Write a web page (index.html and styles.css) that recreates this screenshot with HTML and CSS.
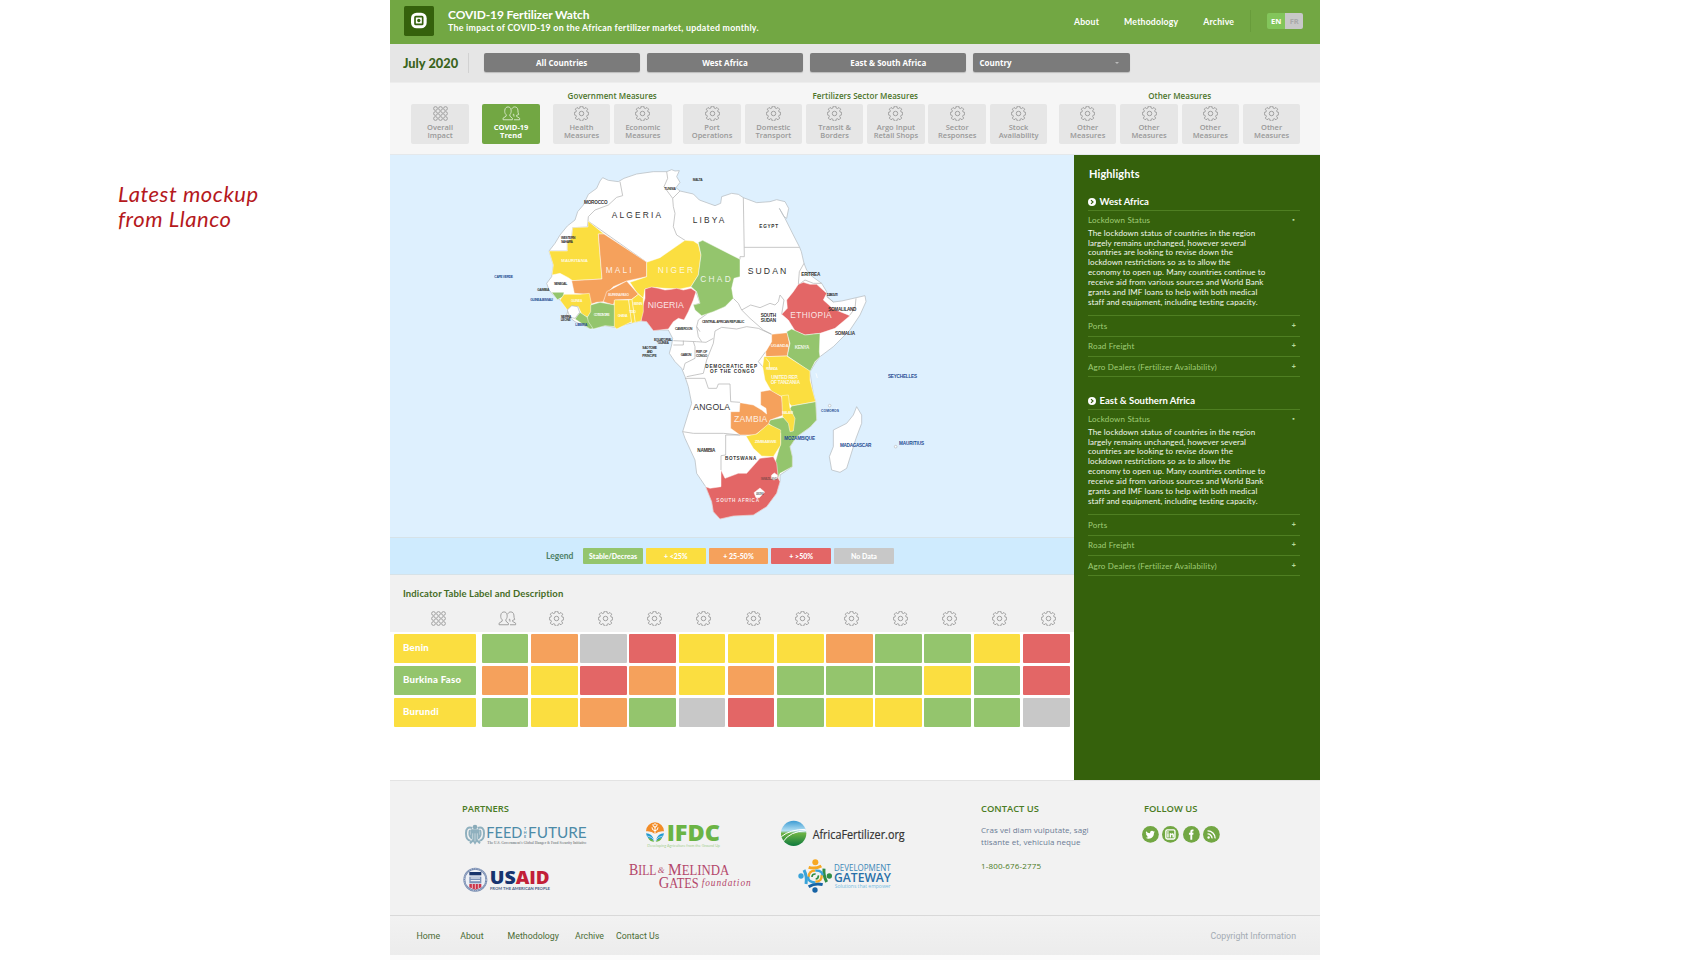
FILE: index.html
```
<!DOCTYPE html>
<html lang="en">
<head>
<meta charset="utf-8">
<title>COVID-19 Fertilizer Watch</title>
<link rel="stylesheet" href="styles.css">
</head>
<body>
<svg class="defs" width="0" height="0" aria-hidden="true">
  <symbol id="gear" viewBox="0 0 24 24"><path d="M10 1.500h4l.6 3 2 .9 2.600-1.700 2.700 2.700-1.700 2.600.9 2 2.400.6v3.800l-2.400.6-.9 2 1.700 2.600-2.700 2.700-2.600-1.700-2 .9-.6 3h-4l-.6-3-2-.9-2.600 1.700-2.700-2.700 1.700-2.600-.9-2-2.400-.6v-3.800l2.400-.6.9-2-1.700-2.600 2.700-2.700 2.600 1.700 2-.9z" transform="translate(0 -1.300)"/><circle cx="12" cy="12" r="3.600"/></symbol>
  <symbol id="grid" viewBox="0 0 24 24"><circle cx="4" cy="4" r="3"/><circle cx="12" cy="4" r="3"/><circle cx="20" cy="4" r="3"/><circle cx="4" cy="12" r="3"/><circle cx="12" cy="12" r="3"/><circle cx="20" cy="12" r="3"/><circle cx="4" cy="20" r="3"/><circle cx="12" cy="20" r="3"/><circle cx="20" cy="20" r="3"/></symbol>
  <symbol id="people" viewBox="0 0 30 24"><path d="M1.500 22v-2.500l5-3.300v-2.200C4 12 4 9 4.300 6.500 4.800 3 7 1.500 9.500 1.500s4.500 1.600 4.900 5c.3 2.500 0 5-2 7.500v2.200l4 3.300v2.500zM15.500 5c.8-2.500 2.500-3.500 4.700-3.500 2.800 0 4.700 1.600 5 5 .2 3 .3 5 1.300 7.200l-3.500 1.300v1.500l5 3v2.500H19M17 14l1.500-1 .5 4"/></symbol>
  <symbol id="arrow" viewBox="0 0 24 24"><circle cx="12" cy="12" r="12" fill="#fff"/><path d="M9 6.500l6 5.500-6 5.500" fill="none" stroke="#35610c" stroke-width="3.500"/></symbol>
</svg>

<aside class="note">Latest mockup<br>from Llanco</aside>

<div class="page">
  <header class="top">
    <svg class="brand" viewBox="0 0 90 90"><rect width="90" height="90" rx="5" fill="#35610c"/><rect x="21" y="20" width="47" height="47" rx="17" fill="#fff"/><rect x="33" y="32" width="23" height="23" rx="2" fill="none" stroke="#35610c" stroke-width="5"/><circle cx="44.500" cy="43.500" r="5" fill="#35610c"/></svg>
    <div class="titles"><h1>COVID-19 Fertilizer Watch</h1><p>The impact of COVID-19 on the African fertilizer market, updated monthly.</p></div>
    <nav class="topnav"><a>About</a><a>Methodology</a><a>Archive</a></nav>
    <div class="lang"><span class="on">EN</span><span>FR</span></div>
  </header>

  <div class="filters">
    <strong class="month">July 2020</strong>
    <div class="btn">All Countries</div><div class="btn">West Africa</div><div class="btn">East &amp; South Africa</div>
    <div class="btn select">Country<i></i></div>
  </div>

  <div class="tabs">
    <div class="group g1"><h2>&nbsp;</h2><div class="set"><div class="tab"><svg><use href="#grid"/></svg>Overall<br>Impact</div></div></div>
    <div class="group g2"><h2>&nbsp;</h2><div class="set"><div class="tab active"><svg class="wide"><use href="#people"/></svg>COVID-19<br>Trend</div></div></div>
    <div class="group g3"><h2>Government Measures</h2><div class="set">
      <div class="tab"><svg><use href="#gear"/></svg>Health<br>Measures</div>
      <div class="tab"><svg><use href="#gear"/></svg>Economic<br>Measures</div></div></div>
    <div class="group g4"><h2>Fertilizers Sector Measures</h2><div class="set">
      <div class="tab"><svg><use href="#gear"/></svg>Port<br>Operations</div>
      <div class="tab"><svg><use href="#gear"/></svg>Domestic<br>Transport</div>
      <div class="tab"><svg><use href="#gear"/></svg>Transit &amp;<br>Borders</div>
      <div class="tab"><svg><use href="#gear"/></svg>Argo Input<br>Retail Shops</div>
      <div class="tab"><svg><use href="#gear"/></svg>Sector<br>Responses</div>
      <div class="tab"><svg><use href="#gear"/></svg>Stock<br>Availability</div></div></div>
    <div class="group g5"><h2>Other Measures</h2><div class="set">
      <div class="tab"><svg><use href="#gear"/></svg>Other<br>Measures</div>
      <div class="tab"><svg><use href="#gear"/></svg>Other<br>Measures</div>
      <div class="tab"><svg><use href="#gear"/></svg>Other<br>Measures</div>
      <div class="tab"><svg><use href="#gear"/></svg>Other<br>Measures</div></div></div>
  </div>

  <div class="body">
    <main>
      <svg class="map" viewBox="-270 0 2052 1146">
        <g class="land">
          <path d="M207 288L225 265 240 240 262 213 285 195 293 170 310 150 325 118 350 100 360 78 368 68 385 76 415 80 432 70 470 57 520 50 560 50 575 44 585 48 598 47 590 65 600 82 588 98 600 108 640 117 658 135 705 152 722 145 725 125 755 115 775 118 790 128 830 143 870 140 890 134 915 140 926 160 920 190 912 185 898 160 915 190 940 240 958 275 964 290 972 325 980 345 997 365 1025 385 1040 410 1042 425 1060 441 1085 438 1155 422 1158 440 1140 480 1110 525 1060 575 1020 605 1005 625 990 650 993 675 1000 715 1007 740 1010 795 990 817 950 845 930 875 937 905 937 935 900 960 900 980 890 1015 860 1055 820 1080 760 1083 720 1092 700 1070 695 1040 677 995 650 955 645 915 615 850 608 830 625 775 635 745 625 695 615 665 605 640 585 620 568 595 575 570 578 550 565 525 520 525 500 500 483 498 450 505 405 517 375 512 330 520 285 500 260 480 265 462 240 435 220 420 207 405 200 385 215 365 220 330Z"/>
          <path d="M1130 755L1145 780 1145 805 1128 850 1100 940 1080 952 1055 945 1048 905 1060 875 1060 825 1100 805 1120 780Z"/>
          <circle cx="1049" cy="752" r="4"/><circle cx="1247" cy="875" r="4"/>
        </g>
        <g class="borders">
          <path d="M420 80L428 122 410 127 385 150 345 165 325 185 324 198 500 322M324 198L322 216 278 218 275 250 262 262 262 288 207 288M560 50L563 70 552 95 578 130 580 155M600 108L578 130M580 155L585 175 580 215 590 240 615 256M790 128L793 305 780 305 780 313M793 277L958 277"/>
          <path d="M760 430L775 445 785 465 812 450 840 458 870 445 885 450 895 440 900 420 912 435 905 478M972 325L958 350 955 388M1025 385L1000 385 975 375 955 390M1060 441L1040 425M1128 430L1125 460 1108 482M785 465L810 490 850 525 875 538M683 475L655 495 650 515 660 530M705 528L725 517 770 522 800 515 835 520 875 538M705 528L700 565 680 615 670 655 620 665M648 410L655 430 660 445 640 450M580 557L650 560 678 562 700 550M610 557L610 570 580 570M640 560L645 575 645 610 615 625 610 645M650 515L655 545 665 560"/>
          <path d="M615 670L675 670 685 700 710 700 715 687 750 687 752 740 780 742M608 830L640 835 730 835 780 840M737 840L737 900 723 902 723 945M737 840L800 840M848 635L835 620 857 590"/>
        </g>
        <g class="c">
          <path class="y" d="M207 288L262 288 262 262 275 250 278 218 324 216 324 198 372 237 355 237 366 372 278 377 265 368 240 355 216 360 220 330Z"/>
          <path class="o" d="M355 237L372 237 495 318 500 322 500 365 440 378 400 395 385 410 370 440 350 442 332 448 320 418 283 415 275 377 366 372Z"/>
          <path class="y" d="M500 322L540 308 615 256 640 258 655 268 663 300 655 360 633 395 600 402 555 400 520 397 495 402 490 430 470 412 450 382 500 365Z"/>
          <path class="g" d="M655 262L668 256 780 313 780 365 762 370 755 400 760 430 735 455 700 470 665 482 645 465 640 450 660 445 650 410 633 395 655 360 663 300Z"/>
          <path class="r" d="M495 402L515 396 535 400 555 405 575 403 590 400 610 405 633 400 648 410 640 435 625 470 612 495 595 490 580 500 565 522 520 527 500 500 483 498 483 470 495 430Z"/>
          <path class="o" d="M370 440L380 410 440 378 455 395 475 418 455 433 405 435 400 450Z"/>
          <path class="g" d="M215 412L252 412 250 425 232 434Z"/>
          <path class="y" d="M240 435L252 418 300 418 328 415 334 445 334 470 322 487 305 477 295 455 275 455 262 465Z"/>
          <path class="g" d="M285 492L300 472 322 487 345 520 330 522Z"/>
          <path class="g" d="M332 450L360 442 405 450 405 515 375 512 340 522 325 500 322 487 332 470Z"/>
          <path class="y" d="M403 435L446 435 455 500 410 522 403 515Z"/>
          <path class="y" d="M446 435L456 433 466 502 455 505Z"/><path class="y" d="M456 433L475 418 490 430 490 470 483 498 466 502Z"/>
          <path class="r" d="M955 388L970 382 990 388 1010 388 1040 415 1030 435 1060 462 1110 482 1065 520 1020 535 975 540 945 527 925 495 905 478 922 460 920 435 940 410Z"/>
          <path class="o" d="M875 538L922 533 928 565 922 603 858 605 857 590 875 560Z"/>
          <path class="g" d="M920 530L935 522 975 540 1020 535 1018 590 1020 605 1005 620 990 650 922 603 930 565Z"/>
          <path class="y" d="M852 605L920 603 990 648 990 675 1000 715 1007 740 935 753 912 728 875 710 855 675 848 635Z"/>
          <path class="g" d="M935 753L1007 740 1010 795 990 817 950 845 930 875 937 905 937 935 900 955 895 970 885 925 902 865 902 835 865 805 870 795 912 787Z"/>
          <path class="o" d="M752 770L778 770 780 743 820 750 845 765 860 777 858 760 842 750 842 710 870 705 905 725 912 780 870 795 865 810 825 840 780 840 752 820Z"/>
          <path class="y" d="M905 722L925 720 930 760 945 790 940 828 930 830 925 805 908 785Z"/>
          <path class="y" d="M798 843L830 837 865 807 902 825 902 870 880 905 845 903 820 880Z"/>
          <path class="r" d="M677 995L690 1000 723 995 723 945 735 970 775 955 800 955 840 910 880 905 890 925 895 970 900 980 890 1015 860 1055 820 1080 760 1083 720 1092 700 1070 695 1040Z"/>
          <path class="e" d="M875 960l8-6 9 6 0 10-10 5-8-4z"/><path class="e" d="M822 1013l18-14 14 12-16 17-10 0z"/>
        </g>
        <path class="e" d="M262 465L275 452 293 455 299 472 285 490 270 487Z"/>
        <path class="lakes" d="M858 610l10 12 0 18M1008 655l4 14M1064 765l8 -6M550 570l3-4"/>
        <g class="big">
          <text x="395" y="189" textLength="148">ALGERIA</text><text x="638" y="204" textLength="95">LIBYA</text>
          <text x="803" y="356" textLength="116" font-size="26">SUDAN</text><text x="640" y="764" textLength="110" font-size="26">ANGOLA</text>
          <g class="w"><text x="377" y="354" textLength="78">MALI</text><text x="533" y="354" textLength="106">NIGER</text><text x="661" y="382" textLength="91">CHAD</text>
          <text x="503" y="458" textLength="108" font-size="26">NIGERIA</text><text x="931" y="489" textLength="124">ETHIOPIA</text><text x="762" y="800" textLength="100" font-size="26">ZAMBIA</text></g>
        </g>
        <g class="mid">
          <text x="312" y="146" textLength="71">MOROCCO</text><text x="838" y="220" textLength="56">EGYPT</text>
          <text x="676" y="639" textLength="155">DEMOCRATIC REP</text><text x="690" y="655" textLength="133">OF THE CONGO</text>
          <text x="842" y="485" textLength="46">SOUTH</text><text x="842" y="501" textLength="46">SUDAN</text>
          <text x="652" y="892" textLength="54">NAMIBIA</text><text x="735" y="916" textLength="94">BOTSWANA</text>
          <text x="964" y="363" textLength="57">ERITREA</text><text x="1045" y="468" textLength="84">SOMALILAND</text><text x="1065" y="540" textLength="60">SOMALIA</text>
          <g class="w"><text x="709" y="1042" textLength="128">SOUTH AFRICA</text></g>
          <g class="b"><text x="913" y="855" textLength="92">MOZAMBIQUE</text><text x="1080" y="876" textLength="94">MADAGASCAR</text><text x="1257" y="870" textLength="75">MAURITIUS</text><text x="1224" y="670" textLength="87">SEYCHELLES</text></g>
        </g>
        <g class="small">
          <text x="638" y="79" textLength="30">MALTA</text><text x="553" y="106" textLength="35">TUNISIA</text>
          <text x="243" y="251" textLength="43">WESTERN</text><text x="243" y="263" textLength="36">SAHARA</text>
          <text x="222" y="391" textLength="40">SENEGAL</text><text x="172" y="407" textLength="36">GAMBIA</text>
          <text x="242" y="488" textLength="32">SIERRA</text><text x="242" y="499" textLength="30">LEONE</text>
          <text x="666" y="505" textLength="127">CENTRAL AFRICAN REPUBLIC</text><text x="585" y="524" textLength="52">CAMEROON</text>
          <text x="522" y="557" textLength="55">EQUATORIAL</text><text x="533" y="568" textLength="34">GUINEA</text>
          <text x="487" y="583" textLength="44">SAO TOME</text><text x="500" y="594" textLength="18">AND</text><text x="487" y="605" textLength="43">PRINCIPE</text>
          <text x="602" y="602" textLength="32">GABON</text><text x="648" y="594" textLength="34">REP. OF</text><text x="648" y="605" textLength="34">CONGO</text>
          <text x="1040" y="424" textLength="33">DJIBOUTI</text><text x="842" y="974" textLength="50" opacity=".5">SWAZILAND</text><text x="828" y="1019" font-size="8" textLength="24" opacity=".6">LESOTHO</text>
          <g class="b"><text x="43" y="370" textLength="56">CAPE VERDE</text><text x="151" y="437" textLength="68">GUINEA-BISSAU</text><text x="286" y="513" textLength="36">LIBERIA</text><text x="1023" y="772" textLength="54">COMOROS</text></g>
          <g class="w"><text x="244" y="322" font-size="13" textLength="80">MAURITANIA</text><text x="385" y="424" textLength="62">BURKINA FASO</text><text x="273" y="440" textLength="34">GUINEA</text><text x="341" y="482" textLength="48">COTE D'IVOIRE</text><text x="413" y="485" textLength="30">GHANA</text><text x="448" y="473" textLength="20">TOGO</text><text x="461" y="450" textLength="26">BENIN</text>
          <text x="872" y="576" font-size="13" textLength="54">UGANDA</text><text x="944" y="583" font-size="14" textLength="44">KENYA</text><text x="874" y="673" font-size="14" textLength="80">UNITED REP.</text><text x="872" y="687" font-size="14" textLength="88">OF TANZANIA</text><text x="858" y="645" textLength="36">RWANDA</text><text x="824" y="863" font-size="13" textLength="66">ZIMBABWE</text><text x="906" y="776" textLength="33">MALAWI</text></g>
        </g>
      </svg>
      <div class="legend"><span class="lbl">Legend</span><b class="g">Stable/Decreas</b><b class="y">+ &lt;25%</b><b class="o">+ 25-50%</b><b class="r">+ &gt;50%</b><b class="n">No Data</b></div>
      <section class="indicators">
        <div class="thead">
          <h3>Indicator Table Label and Description</h3>
          <div class="row icons"><svg><use href="#grid"/></svg><svg class="wide"><use href="#people"/></svg><svg><use href="#gear"/></svg><svg><use href="#gear"/></svg><svg><use href="#gear"/></svg><svg><use href="#gear"/></svg><svg><use href="#gear"/></svg><svg><use href="#gear"/></svg><svg><use href="#gear"/></svg><svg><use href="#gear"/></svg><svg><use href="#gear"/></svg><svg><use href="#gear"/></svg><svg><use href="#gear"/></svg></div>
        </div>
        <div class="row"><b class="y">Benin</b><i class="g"></i><i class="o"></i><i class="n"></i><i class="r"></i><i class="y"></i><i class="y"></i><i class="y"></i><i class="o"></i><i class="g"></i><i class="g"></i><i class="y"></i><i class="r"></i></div>
        <div class="row"><b class="g">Burkina Faso</b><i class="o"></i><i class="y"></i><i class="r"></i><i class="o"></i><i class="y"></i><i class="o"></i><i class="g"></i><i class="g"></i><i class="g"></i><i class="y"></i><i class="g"></i><i class="r"></i></div>
        <div class="row"><b class="y">Burundi</b><i class="g"></i><i class="y"></i><i class="o"></i><i class="g"></i><i class="n"></i><i class="r"></i><i class="g"></i><i class="y"></i><i class="y"></i><i class="g"></i><i class="g"></i><i class="n"></i></div>
      </section>
    </main>

    <aside class="side">
      <h2>Highlights</h2>
      <section>
        <h3><svg><use href="#arrow"/></svg>West Africa</h3>
        <div class="item open"><span>Lockdown Status</span><em>▪</em></div>
        <p>The lockdown status of countries in the region<br>largely remains unchanged, however several<br>countries are looking to revise down the<br>lockdown restrictions so as to allow the<br>economy to open up. Many countries continue to<br>receive aid from various sources and World Bank<br>grants and IMF loans to help with both medical<br>staff and equipment, including testing capacity.</p>
        <div class="item"><span>Ports</span><em>+</em></div><div class="item"><span>Road Freight</span><em>+</em></div><div class="item last"><span>Agro Dealers (Fertilizer Availability)</span><em>+</em></div>
      </section>
      <section>
        <h3><svg><use href="#arrow"/></svg>East &amp; Southern Africa</h3>
        <div class="item open"><span>Lockdown Status</span><em>▪</em></div>
        <p>The lockdown status of countries in the region<br>largely remains unchanged, however several<br>countries are looking to revise down the<br>lockdown restrictions so as to allow the<br>economy to open up. Many countries continue to<br>receive aid from various sources and World Bank<br>grants and IMF loans to help with both medical<br>staff and equipment, including testing capacity.</p>
        <div class="item"><span>Ports</span><em>+</em></div><div class="item"><span>Road Freight</span><em>+</em></div><div class="item last"><span>Agro Dealers (Fertilizer Availability)</span><em>+</em></div>
      </section>
    </aside>
  </div>

  <footer>
    <div class="fcols">
      <section class="partners">
        <h4>PARTNERS</h4>
        <div class="logos r1">
          <svg width="124" height="30" viewBox="72 90 372 90">
            <g fill="none" stroke="#8fb0be" stroke-width="6"><path d="M97 114Q78 108 78 130T92 152M113 114Q132 108 132 130T118 152M90 120Q84 135 96 146M120 120Q126 135 114 146M90 160l10-10M120 160l-10-10"/></g><circle cx="105" cy="111" r="7" fill="#8aabb9"/><path d="M92 118h26v18q-5 18-13 28-8-10-13-28z" fill="#8fb0be"/><path d="M98 130v18M105 130v24M112 130v18" stroke="#dfe7ea" stroke-width="2"/>
            <g fill="#4d8ba8" font-family="Lato" font-size="46"><text x="139" y="144" textLength="108" lengthAdjust="spacingAndGlyphs">FEED</text><text x="264" y="144" textLength="176" lengthAdjust="spacingAndGlyphs">FUTURE</text><g font-size="11" font-weight="700"><text x="252" y="121">T</text><text x="251" y="133">H</text><text x="252" y="145">E</text></g></g>
            <text x="142" y="162" font-family="Liberation Serif" font-weight="700" font-size="12" fill="#8a8f92" textLength="298" lengthAdjust="spacingAndGlyphs">The U.S. Government's Global Hunger &amp; Food Security Initiative</text>
          </svg>
          <svg width="78" height="30" viewBox="612 90 234 90">
            <path d="M618 124a27 27 0 0 1 54 0q-16-2-27 8-11-10-27-8z" fill="#f28c28"/><path d="M645 134v-26M645 112q-8-2-6-10M645 112q8-2 6-10M645 122q-10-1-9-10M645 122q10-1 9-10M645 105v-6" stroke="#fff" stroke-width="3" fill="none"/><path d="M618 130q18 0 25 22-22-2-25-22zM672 130q-18 0-25 22 22-2 25-22z" fill="#1f9ad0"/><path d="M622 138q14 2 21 13M668 138q-14 2-21 13" stroke="#f2f2f2" stroke-width="2" fill="none"/><path d="M624 144q12 2 19 11-14 0-19-11zM666 144q-12 2-19 11 14 0 19-11z" fill="#69b53e"/>
            <text x="680" y="152" font-family="Open Sans" font-weight="800" font-size="68" fill="#6bb445" textLength="160" lengthAdjust="spacingAndGlyphs">IFDC</text>
            <text x="622" y="171" font-family="Lato" font-size="10" fill="#a5cf8f" textLength="218" lengthAdjust="spacingAndGlyphs">Developing Agriculture from the Ground Up</text>
          </svg>
          <svg width="126" height="30" viewBox="1020 90 378 90">
            <defs><linearGradient id="sky" x2="0" y2="1"><stop offset="0" stop-color="#3c9bd3"/><stop offset=".4" stop-color="#b5e0f3"/><stop offset=".5" stop-color="#6cb345"/><stop offset="1" stop-color="#0e7a3e"/></linearGradient></defs>
            <circle cx="1061" cy="130" r="38" fill="url(#sky)"/><path d="M1024 140Q1050 118 1097 118M1030 154Q1050 124 1098 122" fill="none" stroke="#fff" stroke-width="3"/>
            <text x="1118" y="147" font-family="Open Sans" font-size="37" fill="#333" stroke="#333" stroke-width=".6" textLength="276" lengthAdjust="spacingAndGlyphs">AfricaFertilizer.org</text>
          </svg>
        </div>
        <div class="logos r2">
          <svg width="90" height="36" viewBox="66 204 270 108">
            <circle cx="106" cy="269" r="33" fill="#eef1f6" stroke="#7288ae" stroke-width="6"/><circle cx="106" cy="269" r="33" fill="none" stroke="#dce3ed" stroke-width="2" stroke-dasharray="4 3"/><path d="M88 246h36v10H88z" fill="#18346b"/><path d="M88 260h36v20H88z" fill="#7d92b8"/><path d="M88 282h36v10l-18 7-18-7z" fill="#c93349"/><path d="M92 264h28M92 272h28" stroke="#fff" stroke-width="3"/><path d="M97 282v12M106 282v15M115 282v12" stroke="#fff" stroke-width="2"/>
            <text x="149" y="283" font-family="Open Sans" font-weight="800" font-size="50" fill="#17346f" textLength="78" lengthAdjust="spacingAndGlyphs">US</text><text x="227" y="283" font-family="Open Sans" font-weight="800" font-size="50" fill="#c21f38" textLength="102" lengthAdjust="spacingAndGlyphs">AID</text>
            <text x="150" y="300" font-family="Lato" font-weight="700" font-size="13" fill="#4b5d85" textLength="180" lengthAdjust="spacingAndGlyphs">FROM THE AMERICAN PEOPLE</text>
          </svg>
          <svg width="124" height="36" viewBox="564 204 372 108">
            <g fill="#b4476a" font-family="Liberation Serif"><text x="567" y="254" textLength="82" lengthAdjust="spacingAndGlyphs"><tspan font-size="49">B</tspan><tspan font-size="41">ILL</tspan></text><text x="653" y="248" font-size="26" font-style="italic">&amp;</text><text x="684" y="254" textLength="184" lengthAdjust="spacingAndGlyphs"><tspan font-size="49">M</tspan><tspan font-size="41">ELINDA</tspan></text><text x="656" y="293" textLength="120" lengthAdjust="spacingAndGlyphs"><tspan font-size="49">G</tspan><tspan font-size="41">ATES</tspan></text><text x="785" y="288" font-size="28" font-style="italic" textLength="147">foundation</text></g>
          </svg>
          <svg width="96" height="36" viewBox="1074 204 288 108">
            <g fill="none" stroke-width="9"><path d="M1106 232Q1125 238 1144 228" stroke="#f7a823"/><path d="M1152 236Q1150 258 1160 276" stroke="#2f8d46"/><path d="M1148 284Q1126 278 1106 290" stroke="#1763a5"/><path d="M1098 282Q1102 260 1092 240" stroke="#38a3d9"/><path d="M1106 262Q1105 242 1126 242M1126 275Q1147 275 1145 254" stroke-width="7" stroke="#f7a823"/><path d="M1126 242Q1146 240 1148 256M1104 260Q1105 278 1126 277" stroke-width="7" stroke="#38a3d9"/><path d="M1116 261Q1116 251 1127 252M1127 267Q1136 266 1135 256" stroke="#2f8d46" stroke-width="5"/></g><circle cx="1126" cy="217" r="9" fill="#f7a823"/><circle cx="1168" cy="258" r="8" fill="#2f8d46"/><circle cx="1125" cy="300" r="8" fill="#1763a5"/><circle cx="1083" cy="258" r="8" fill="#38a3d9"/>
            <g font-family="Open Sans"><text x="1182" y="242" font-size="25" fill="#3987b8" textLength="170" lengthAdjust="spacingAndGlyphs">DEVELOPMENT</text><text x="1182" y="276" font-size="37" font-weight="600" fill="#286fa8" textLength="171" lengthAdjust="spacingAndGlyphs">GATEWAY</text><text x="1184" y="295" font-size="15" fill="#75bce2" textLength="168" lengthAdjust="spacingAndGlyphs">Solutions that empower</text></g>
          </svg>
        </div>
      </section>
      <section class="contact"><h4>CONTACT US</h4><p>Cras vel diam vulputate, sagi<br>ttisante et, vehicula neque</p><p class="tel">1-800-676-2775</p></section>
      <section class="follow"><h4>FOLLOW US</h4>
        <div class="social">
          <svg viewBox="0 0 24 24"><circle cx="12" cy="12" r="12"/><path class="f" d="M18.500 8.200l-1.500.5 1.100-1.500-1.800.7a2.800 2.800 0 0 0-4.800 2.400c-2.300-.1-4.300-1.200-5.600-2.900-.8 1.400-.3 2.900.9 3.700l-1.200-.3c0 1.400 1 2.500 2.200 2.800h-1.200c.4 1.100 1.400 1.900 2.600 1.900-1.200 1-2.600 1.300-4.100 1.200 6 3.500 12.200-.2 12-7z"/></svg>
          <svg viewBox="0 0 24 24"><circle cx="12" cy="12" r="12"/><rect class="s" x="5.500" y="5.500" width="13" height="13" rx="2"/><path class="f" d="M7.500 10.500h2v6h-2zM7.500 7.500h2v2h-2zM11 10.500h2v1c1-1.700 4-1.300 4 1.500v3.500h-2v-3c0-1.500-2-1.500-2 0v3h-2z"/></svg>
          <svg viewBox="0 0 24 24"><circle cx="12" cy="12" r="12"/><path class="f" d="M10.500 19.500v-7h-2v-2.700h2V8c0-2.500 1.500-3.500 4.500-3v2.500c-1.500-.1-1.800.2-1.800 1v1.300H15l-.3 2.700h-1.500v7z"/></svg>
          <svg viewBox="0 0 24 24"><circle cx="12" cy="12" r="12"/><circle class="f" cx="8" cy="16.500" r="1.700"/><path class="s" d="M6.500 11.300a6.200 6.200 0 0 1 6.400 6.400M6.500 7a10.500 10.500 0 0 1 10.800 10.700"/></svg>
        </div></section>
    </div>
    <div class="bottom"><nav><a>Home</a><a>About</a><a>Methodology</a><a>Archive</a><a>Contact Us</a></nav><span>Copyright Information</span></div>
  </footer>
</div>
</body>
</html>
```
FILE: styles.css
```
* { box-sizing: border-box; }
body { margin: 0; height: 960px; overflow: hidden; background: #fff; display: flex; font-family: Lato, sans-serif; }
h1, h2, h3, h4, p { margin: 0; }
.defs { position: absolute; }
.note { width: 390px; padding: 181px 0 0 118px; font: italic 22px/25px Lato, sans-serif; letter-spacing: .55px; color: #b5191d; }
.page { width: 930px; height: 960px; background: #fbfbfb; display: flex; flex-direction: column; }

.y { background: #fbde40; fill: #fbde40; }
.g { background: #94c56d; fill: #94c56d; }
.o { background: #f5a15c; fill: #f5a15c; }
.r { background: #e36666; fill: #e36666; }
.n { background: #c8c8c8; }

.top { height: 44px; background: #72a743; display: flex; color: #fff; padding-left: 14px; }
.brand { width: 30px; height: 30px; margin-top: 6px; }
.titles { width: 640px; padding: 7px 0 0 14px; white-space: nowrap; }
.titles h1 { font: 700 12px/15px Lato, sans-serif; letter-spacing: -.1px; }
.titles p { font: 700 8.800px/12px Lato, sans-serif; letter-spacing: .26px; }
.topnav { display: flex; gap: 25px; padding: 5px 16px 0 0; margin-top: 10px; height: 22px; font: 700 8.700px/13px Lato, sans-serif; letter-spacing: .2px; border-right: 1px solid #689c3b; }
.lang { display: flex; width: 36px; height: 16px; margin: 13px 0 0 16px; border-radius: 2px; overflow: hidden; font: 700 7.500px/16px "Open Sans", sans-serif; text-align: center; }
.lang span { width: 18px; background: #c8c8c8; color: #a9a9a9; }
.lang .on { background: #83c55b; color: #fff; }

.filters { height: 39px; background: #e6e6e6; border-bottom: 1px solid #ededed; display: flex; padding: 9px 0 0 13px; gap: 7px; }
.month { width: 66px; height: 20px; margin-right: 7.500px; border-right: 1px solid #d2d2d2; font: 900 12.800px/20px Lato, sans-serif; color: #3b641c; }
.btn { width: 156.300px; height: 19px; background: #7b7b7b; border-radius: 2px; box-shadow: 0 1px 1px #bbb; color: #fff; font: 700 8px/19px "Open Sans", sans-serif; text-align: center; }
.select { text-align: left; padding: 0 11px 0 6px; display: flex; justify-content: space-between; align-items: center; }
.select i { border: 2px solid transparent; border-top-color: #bbb; border-bottom: 0; }

.tabs { height: 72px; background: #f6f6f6; border-bottom: 1px solid #e4e8eb; display: flex; padding: 6.500px 0 0 21.300px; }
.group h2 { font: 600 8px/12px "Open Sans", sans-serif; color: #4b7429; text-align: center; height: 14.600px; letter-spacing: .05px; }
.g2 { margin-left: 13.500px; } .g3 { margin-left: 13px; } .g4 { margin-left: 11.700px; } .g5 { margin-left: 11.700px; }
.set { display: flex; gap: 3.800px; }
.tab { width: 57.500px; height: 40px; padding-top: 2px; background: #e6e6e6; border-radius: 2px; font: 600 7.500px/8px "Open Sans", sans-serif; color: #999; text-align: center; white-space: nowrap; }
.tab svg, .icons svg { width: 15px; height: 15px; display: block; fill: none; stroke: #9b9b9b; stroke-width: 1.500; }
.tab svg { margin: 0 auto 1.500px; }
.tab svg.wide, .icons svg.wide { width: 19px; }
.tab.active { background: #72a743; color: #fff; font-weight: 700; }
.tab.active svg { stroke: #d6e8c8; }

.body { height: 625px; display: flex; background: #fff; }
main { width: 684px; }
.map { display: block; width: 684px; height: 382px; background: #def0fe; }
.land path, .land circle, .e { fill: #fff; stroke: #b7bcc0; stroke-width: 2.200; }
.borders path, .lakes { fill: none; stroke: #b4b4b4; stroke-width: 2.200; }
.c path { stroke: #fff; stroke-opacity: .75; stroke-width: 1.800; stroke-linejoin: round; }
.lakes { stroke: #fff; }
.map text { font-family: "Liberation Sans", sans-serif; fill: #333; }
.big { font-size: 25px; }
.mid { font-size: 14px; font-weight: 700; }
.small { font-size: 10px; font-weight: 700; }
.map .w text { fill: #fff; fill-opacity: .85; }
.map .b text { fill: #1f4c91; }

.legend { height: 38px; background: #cfebfe; border: 1px solid #d6e2e8; border-width: 1px 0; display: flex; padding: 9.500px 0 0 156px; gap: 3px; }
.legend .lbl { width: 34.300px; font: 700 8.500px/17px Lato, sans-serif; color: #4d7f66; }
.legend b { width: 59.700px; height: 16px; border-radius: 1px; color: #fff; font: 900 7px/16px Lato, sans-serif; text-align: center; white-space: nowrap; }
.thead { height: 57px; background: #f1f1f1; padding-top: 12px; margin-bottom: 2px; }
.thead h3 { padding-left: 13px; font: 700 9.500px/14px Lato, sans-serif; color: #456c25; letter-spacing: .12px; }
.row { display: grid; grid-template-columns: 85.300px repeat(12, 46.700px); column-gap: 2.500px; padding-left: 4px; height: 28.700px; margin-bottom: 3.300px; }
.row b { width: 82px; border-radius: 1px; padding-left: 9px; font: 900 9.600px/28px Lato, sans-serif; letter-spacing: .25px; color: #fff; }
.row i { border-radius: 1px; }
.icons { margin-top: 10px; height: 16px; justify-items: center; padding-left: 6px; }

.side { width: 246px; background: #35610c; padding: 12px 20px 0 14px; color: #fff; white-space: nowrap; }
.side h2 { font: 700 11px/14px Lato, sans-serif; padding-left: 1px; margin-bottom: 14px; letter-spacing: .1px; }
.side section { margin-bottom: 17px; height: 182px; }
.side h3 { display: flex; align-items: center; gap: 3.500px; height: 15px; padding-bottom: 1px; font: 700 9.500px/14px Lato, sans-serif; }
.side h3 svg { width: 8px; height: 8px; }
.item { height: 20.600px; border-top: 1px solid #4f7f22; display: flex; justify-content: space-between; align-items: center; padding: 0 4px 0 0; font-size: 8px; color: #a0cd77; letter-spacing: .18px; }
.item em { font: 700 7px/8px "Liberation Sans", sans-serif; color: #b9dc9b; }
.item.open { height: 18px; padding-right: 5px; }
.item.last { height: 21px; border-bottom: 1px solid #4f7f22; }
.side p { height: 87px; padding-top: .8px; font: 400 8px/9.850px Lato, sans-serif; color: #f4f8ef; letter-spacing: .11px; }

footer { height: 175px; background: #f2f2f2; border-top: 1px solid #e3e3e3; }
.fcols { height: 134px; display: flex; padding: 20.500px 0 0 72px; }
footer h4 { font: 600 9.400px/14px "Open Sans", sans-serif; color: #4a7b23; }
.partners { width: 519px; }
.logos { display: flex; }
.logos svg { overflow: visible; }
.r1 { margin: 4px 0 0 2px; } .r1 svg + svg { margin-left: 56px; } .r1 svg:last-child { margin-left: 58px; }
.r2 { margin-top: 8px; } .r2 svg:nth-child(2) { margin-left: 76px; } .r2 svg:last-child { margin-left: 46px; }
.contact { width: 161px; }
.contact p { margin-top: 8.500px; font: 400 8px/12px "Open Sans", sans-serif; color: #6a7b94; letter-spacing: .05px; }
.contact .tel { margin-top: 12px; color: #4a7b23; letter-spacing: .15px; }
.follow h4 { padding-left: 2px; }
.social { display: flex; gap: 3.600px; margin-top: 10.500px; }
.social svg { width: 16.800px; height: 16.800px; fill: #72a743; }
.social .f { fill: #fff; }
.social .s { fill: none; stroke: #fff; stroke-width: 2; }
.bottom { height: 40px; border-top: 1px solid #d9d9d9; background: linear-gradient(#f2f2f2, #ececec); display: flex; justify-content: space-between; padding: 12.500px 24px 0 26.500px; font: 400 8.800px/14px Roboto, sans-serif; color: #4a6b35; }
.bottom nav { display: flex; }
.bottom a { margin-right: 20px; }
.bottom a:nth-child(2) { margin-right: 24px; }
.bottom a:nth-child(3) { margin-right: 16px; }
.bottom a:nth-child(4) { margin-right: 12px; }
.bottom span { color: #a3abb3; }
```
